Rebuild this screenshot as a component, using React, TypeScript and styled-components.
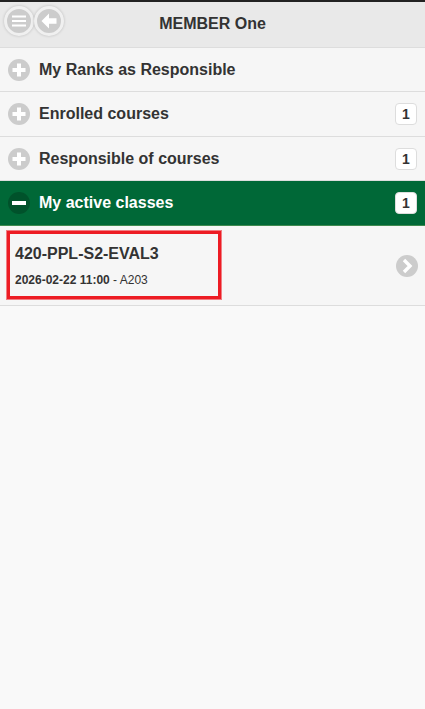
import styled, { createGlobalStyle } from 'styled-components'

const GlobalStyle = createGlobalStyle`
  html, body {
    margin: 0;
    padding: 0;
    height: 100%;
    background: #f9f9f9;
  }
  body {
    font-family: 'Liberation Sans', Arial, sans-serif;
    color: #333;
  }
`

const sections = [
  { title: 'My Ranks as Responsible' },
  { title: 'Enrolled courses', count: 1 },
  { title: 'Responsible of courses', count: 1 },
  { title: 'My active classes', count: 1, open: true },
]

const PlusGlyph = () => (
  <svg width="22" height="22" viewBox="0 0 22 22">
    <path d="M11 4.5v13M4.5 11h13" stroke="#fff" strokeWidth="4" fill="none" />
  </svg>
)

const MinusGlyph = () => (
  <svg width="22" height="22" viewBox="0 0 22 22">
    <path d="M4 11h14" stroke="#fff" strokeWidth="4" fill="none" />
  </svg>
)

const App = () => {
  return (
    <>
      <GlobalStyle />
      <Page>
        <Header>
          <HeaderButtons>
            <RoundButton aria-label="Menu">
              <svg width="22" height="22" viewBox="0 0 22 22">
                <path d="M4 6.5h14M4 11h14M4 15.5h14" stroke="#fff" strokeWidth="2" fill="none" />
              </svg>
            </RoundButton>
            <RoundButton aria-label="Back">
              <svg width="22" height="22" viewBox="0 0 22 22">
                <path d="M11 3.5 3.5 11l7.5 7.5v-4.7h7.5V8.2H11z" fill="#fff" />
              </svg>
            </RoundButton>
          </HeaderButtons>
          <HeaderTitle>MEMBER One</HeaderTitle>
        </Header>

        {sections.map((section) => (
          <SectionRow key={section.title} $open={section.open}>
            <SectionIcon $open={section.open}>
              {section.open ? <MinusGlyph /> : <PlusGlyph />}
            </SectionIcon>
            <SectionTitle $open={section.open}>{section.title}</SectionTitle>
            {section.count !== undefined && <CountBadge>{section.count}</CountBadge>}
          </SectionRow>
        ))}

        <ClassItem>
          <ClassText>
            <ClassName>420-PPL-S2-EVAL3</ClassName>
            <ClassMeta>
              <strong>2026-02-22 11:00</strong> - A203
            </ClassMeta>
          </ClassText>
          <ChevronCircle>
            <svg width="22" height="22" viewBox="0 0 22 22">
              <path d="m8 5 6 6-6 6" stroke="#fff" strokeWidth="3.4" fill="none" />
            </svg>
          </ChevronCircle>
          <Highlight />
        </ClassItem>
      </Page>
    </>
  )
}

export default App

const Page = styled.div`
  min-height: 709px;
  background: #f9f9f9;
`

const Header = styled.header`
  position: relative;
  display: flex;
  align-items: center;
  justify-content: center;
  box-sizing: border-box;
  height: 47.5px;
  border-top: 2px solid #222;
  border-bottom: 1px solid #ddd;
  background: #e9e9e9;
`

const HeaderButtons = styled.div`
  position: absolute;
  top: 4px;
  left: 4px;
  display: flex;
`

const RoundButton = styled.div`
  display: flex;
  align-items: center;
  justify-content: center;
  box-sizing: border-box;
  width: 30px;
  height: 30px;
  border: 3px solid #f0f0f0;
  border-radius: 50%;
  background: #ccc;
  box-shadow: 0 0 3px rgba(0, 0, 0, 0.2);
`

const HeaderTitle = styled.h1`
  margin: 0;
  font-size: 16px;
  font-weight: 700;
  color: #333;
`

const SectionRow = styled.div<{ $open?: boolean }>`
  display: flex;
  align-items: center;
  box-sizing: border-box;
  height: 44.5px;
  padding: 1px 8px 0;
  border-bottom: 1px solid ${({ $open }) => ($open ? '#3f8a4f' : '#ddd')};
  background: ${({ $open }) => ($open ? '#006837' : '#f6f6f6')};
`

const SectionIcon = styled.div<{ $open?: boolean }>`
  display: flex;
  flex: none;
  align-items: center;
  justify-content: center;
  width: 22px;
  height: 22px;
  border-radius: 50%;
  background: ${({ $open }) => ($open ? '#00522b' : '#ccc')};
`

const SectionTitle = styled.span<{ $open?: boolean }>`
  flex: 1;
  margin-left: 9px;
  font-size: 16px;
  font-weight: 700;
  color: ${({ $open }) => ($open ? '#fff' : '#333')};
`

const CountBadge = styled.span`
  display: flex;
  align-items: center;
  justify-content: center;
  box-sizing: border-box;
  width: 22px;
  height: 22px;
  border: 1px solid #ddd;
  border-radius: 4px;
  background: #fff;
  font-size: 14px;
  font-weight: 700;
  color: #333;
`

const ClassItem = styled.div`
  position: relative;
  display: flex;
  align-items: center;
  justify-content: space-between;
  box-sizing: border-box;
  height: 80px;
  padding: 1px 7px 0 15px;
  border-bottom: 1px solid #ddd;
  background: #f6f6f6;
`

const ClassText = styled.div`
  display: flex;
  flex-direction: column;
  gap: 10px;
`

const ClassName = styled.h2`
  margin: 0;
  font-size: 16px;
  font-weight: 700;
  color: #333;
`

const ClassMeta = styled.p`
  margin: 0;
  font-size: 12px;
  color: #333;
`

const ChevronCircle = styled.div`
  display: flex;
  align-items: center;
  justify-content: center;
  width: 22px;
  height: 22px;
  border-radius: 50%;
  background: #ccc;
`

const Highlight = styled.div`
  position: absolute;
  top: 5.5px;
  left: 7px;
  box-sizing: border-box;
  width: 214px;
  height: 68px;
  border: 3px solid #ed1c24;
  box-shadow: 0 0 0 1px rgba(237, 28, 36, 0.55);
  pointer-events: none;
`
